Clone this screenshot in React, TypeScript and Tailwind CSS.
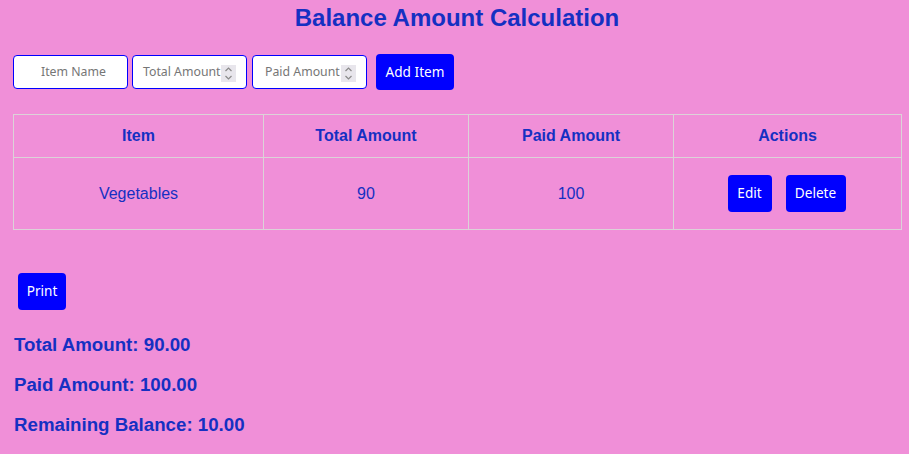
import React from "react";

const Spinner = () => (
  <span className="absolute left-[88px] top-[9px] w-[15px] h-[17px] bg-[#e8e6ec] flex flex-col items-center justify-center">
    <svg width="9" height="15" viewBox="0 0 9 15" fill="none" stroke="#8a8a8a" strokeWidth="1.2">
      <path d="M1.5 5 L4.5 2 L7.5 5" />
      <path d="M1.5 10 L4.5 13 L7.5 10" />
    </svg>
  </span>
);

const Field = ({ ph, spin, padL }: { ph: string; spin?: boolean; padL: string }) => (
  <div className="relative w-[115px] h-[34px] bg-white border border-[#0000ff] rounded-[4px] overflow-hidden">
    <span className={`absolute top-0 h-full flex items-center text-[12.3px] text-[#767676] whitespace-nowrap ${padL}`} style={{ fontFamily: '"Noto Sans", sans-serif' }}>
      {ph}
    </span>
    {spin && <Spinner />}
  </div>
);

const Btn = ({ children, cls }: { children: React.ReactNode; cls: string }) => (
  <button className={`bg-[#0000ff] text-white rounded-[4px] text-[13.6px] ${cls}`} style={{ fontFamily: '"Noto Sans", sans-serif' }}>
    {children}
  </button>
);

export default function App() {
  return (
    <div className="w-[909px] h-[454px] bg-[#f08fd8] text-[#1530c2] overflow-hidden" style={{ fontFamily: '"Liberation Sans", Arial, sans-serif' }}>
      <h2 className="text-[24px] font-bold text-center leading-[28px] pt-[4px] pl-[5px]">Balance Amount Calculation</h2>
      <div className="flex items-center mt-[22px] ml-[13px] h-[36px]">
        <Field ph="Item Name" padL="left-[27px]" />
        <div className="w-[4px]" />
        <Field ph="Total Amount" spin padL="left-[10px]" />
        <div className="w-[5px]" />
        <Field ph="Paid Amount" spin padL="left-[12px]" />
        <div className="w-[9px]" />
        <Btn cls="w-[78px] h-[36px]">Add Item</Btn>
      </div>
      <table className="mt-[24px] ml-[13px] border-collapse text-[16px]">
        <thead>
          <tr className="h-[43px]">
            <th className="w-[250px] border border-[#dcd2d8] font-bold">Item</th>
            <th className="w-[205px] border border-[#dcd2d8] font-bold">Total Amount</th>
            <th className="w-[205px] border border-[#dcd2d8] font-bold">Paid Amount</th>
            <th className="w-[228px] border border-[#dcd2d8] font-bold">Actions</th>
          </tr>
        </thead>
        <tbody>
          <tr className="h-[72px]">
            <td className="border border-[#dcd2d8] text-center">Vegetables</td>
            <td className="border border-[#dcd2d8] text-center">90</td>
            <td className="border border-[#dcd2d8] text-center">100</td>
            <td className="border border-[#dcd2d8]">
              <div className="flex justify-center gap-[14px] pr-[2px]">
                <Btn cls="w-[44px] h-[37px]">Edit</Btn>
                <Btn cls="w-[60px] h-[37px]">Delete</Btn>
              </div>
            </td>
          </tr>
        </tbody>
      </table>
      <div className="ml-[18px] mt-[43px]">
        <Btn cls="w-[48px] h-[37px]">Print</Btn>
      </div>
      <div className="ml-[14px] mt-[24px] flex flex-col gap-[18px] text-[18.7px] font-bold leading-[22px]">
        <div>Total Amount: 90.00</div>
        <div>Paid Amount: 100.00</div>
        <div>Remaining Balance: 10.00</div>
      </div>
    </div>
  );
}
